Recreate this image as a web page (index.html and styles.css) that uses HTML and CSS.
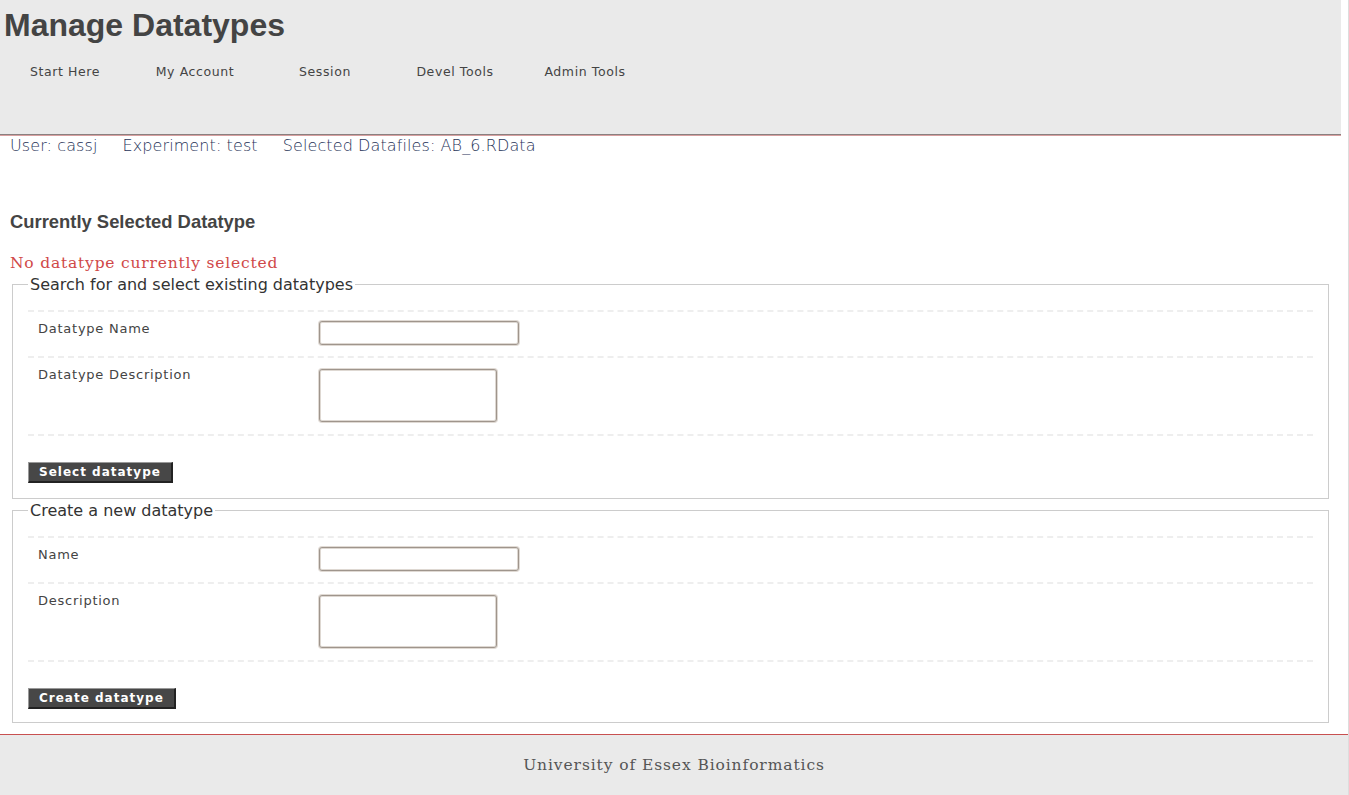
FILE: index.html
```html
<!DOCTYPE html>
<html>
<head>
<meta charset="utf-8">
<title>Manage Datatypes</title>
<link rel="stylesheet" href="styles.css">
</head>
<body>
<div class="page">
  <header class="header">
    <h1 class="title">Manage Datatypes</h1>
    <nav class="nav">
      <a class="nav-item">Start Here</a>
      <a class="nav-item">My Account</a>
      <a class="nav-item">Session</a>
      <a class="nav-item">Devel Tools</a>
      <a class="nav-item">Admin Tools</a>
    </nav>
  </header>
  <div class="info">
    <span class="info-item">User: cassj</span>
    <span class="info-item">Experiment: test</span>
    <span class="info-item">Selected Datafiles: AB_6.RData</span>
  </div>
  <main class="content">
    <h2 class="section-title">Currently Selected Datatype</h2>
    <p class="notice">No datatype currently selected</p>
    <fieldset class="box">
      <legend class="legend">Search for and select existing datatypes</legend>
      <div class="rows">
        <div class="row">
          <label class="label">Datatype Name</label>
          <input class="text-input" type="text">
        </div>
        <div class="row">
          <label class="label">Datatype Description</label>
          <textarea class="text-area"></textarea>
        </div>
      </div>
      <button class="btn" type="button">Select datatype</button>
    </fieldset>
    <fieldset class="box box-second">
      <legend class="legend">Create a new datatype</legend>
      <div class="rows">
        <div class="row">
          <label class="label">Name</label>
          <input class="text-input" type="text">
        </div>
        <div class="row">
          <label class="label">Description</label>
          <textarea class="text-area"></textarea>
        </div>
      </div>
      <button class="btn" type="button">Create datatype</button>
    </fieldset>
  </main>
  <footer class="footer">University of Essex Bioinformatics</footer>
</div>
</body>
</html>
```

FILE: styles.css
```css
html, body {
  margin: 0;
  padding: 0;
  background: #ffffff;
}

.page {
  width: 1348px;
  min-height: 795px;
  border-right: 1px solid #dddddd;
  font-family: "DejaVu Sans", sans-serif;
  color: #444444;
}

.header {
  width: 1341px;
  height: 134px;
  background: #eaeaea;
  border-bottom: 1px solid #8a8080;
  box-shadow: 0 1px 0 #d8a0a0;
  box-sizing: content-box;
}

.title {
  margin: 0;
  padding: 7px 0 0 4px;
  font-family: "Liberation Sans", Arial, sans-serif;
  font-weight: bold;
  font-size: 32px;
  line-height: 36px;
  color: #444444;
}

.nav {
  display: flex;
  margin-top: 19px;
}

.nav-item {
  width: 130px;
  text-align: center;
  font-size: 12.5px;
  letter-spacing: 0.6px;
  line-height: 20px;
  color: #444444;
}

.info {
  display: flex;
  gap: 25px;
  padding: 1px 0 0 10px;
  height: 20px;
  margin-top: 0;
  font-size: 16px;
  font-weight: 200;
  letter-spacing: 0.1px;
  line-height: 20px;
  color: #1f3358;
}

.content {
  padding: 0 0 0 12px;
  width: 1317px;
}

.section-title {
  margin: 55px 0 0 -2px;
  font-family: "Liberation Sans", Arial, sans-serif;
  font-size: 18.4px;
  font-weight: bold;
  line-height: 22px;
  color: #444444;
}

.notice {
  margin: 20px 0 0 -2px;
  font-family: "DejaVu Serif", serif;
  font-size: 15.5px;
  font-weight: 200;
  letter-spacing: 0.8px;
  line-height: 20px;
  color: #d04848;
}

.box {
  margin: 2px 0 0 0;
  padding: 0 15px 15px 15px;
  border: 1px solid #cccccc;
  min-width: 0;
}

.box-second {
  margin-top: 2px;
  padding-bottom: 13px;
}

.legend {
  padding: 0 2px;
  font-size: 16px;
  line-height: 19px;
  color: #333333;
}

.rows {
  margin-top: 16px;
  border-bottom: 2px dashed #eeeeee;
  margin-bottom: 26px;
}

.row {
  display: grid;
  grid-template-columns: 291px 1fr;
  align-items: start;
  border-top: 2px dashed #eeeeee;
  padding: 9px 0 11px 0;
}

.label {
  padding: 0 0 0 10px;
  margin-top: 0;
  font-size: 13px;
  letter-spacing: 0.75px;
  line-height: 16px;
  color: #444444;
}

.text-input {
  display: block;
  box-sizing: border-box;
  width: 200px;
  height: 24px;
  margin: 0;
  border: 1px solid #9f958c;
  border-radius: 3px;
  background: #ffffff;
  box-shadow: 0 0 0 1px #e0dad4, inset 0 0 0 1px #ded8d2;
}

.text-area {
  display: block;
  box-sizing: border-box;
  width: 178px;
  height: 53px;
  margin: 2px 0 1px 0;
  border: 1px solid #9f958c;
  border-radius: 3px;
  background: #ffffff;
  resize: none;
  box-shadow: 0 0 0 1px #e0dad4, inset 0 0 0 1px #ded8d2;
}

.btn {
  display: block;
  margin: 0;
  height: 21px;
  padding: 0 10px 0 10px;
  background: #474747;
  color: #ffffff;
  font-family: "DejaVu Sans", sans-serif;
  font-weight: bold;
  font-size: 12px;
  letter-spacing: 1px;
  line-height: 17px;
  border-style: solid;
  border-width: 1px 2px 2px 1px;
  border-color: #999999 #222222 #222222 #999999;
}

.footer {
  margin-top: 11px;
  height: 60px;
  background: #eaeaea;
  border-top: 1px solid #c85050;
  font-family: "DejaVu Serif", serif;
  font-size: 15.5px;
  font-weight: 200;
  letter-spacing: 0.9px;
  line-height: 60px;
  text-align: center;
  color: #555555;
}
```
